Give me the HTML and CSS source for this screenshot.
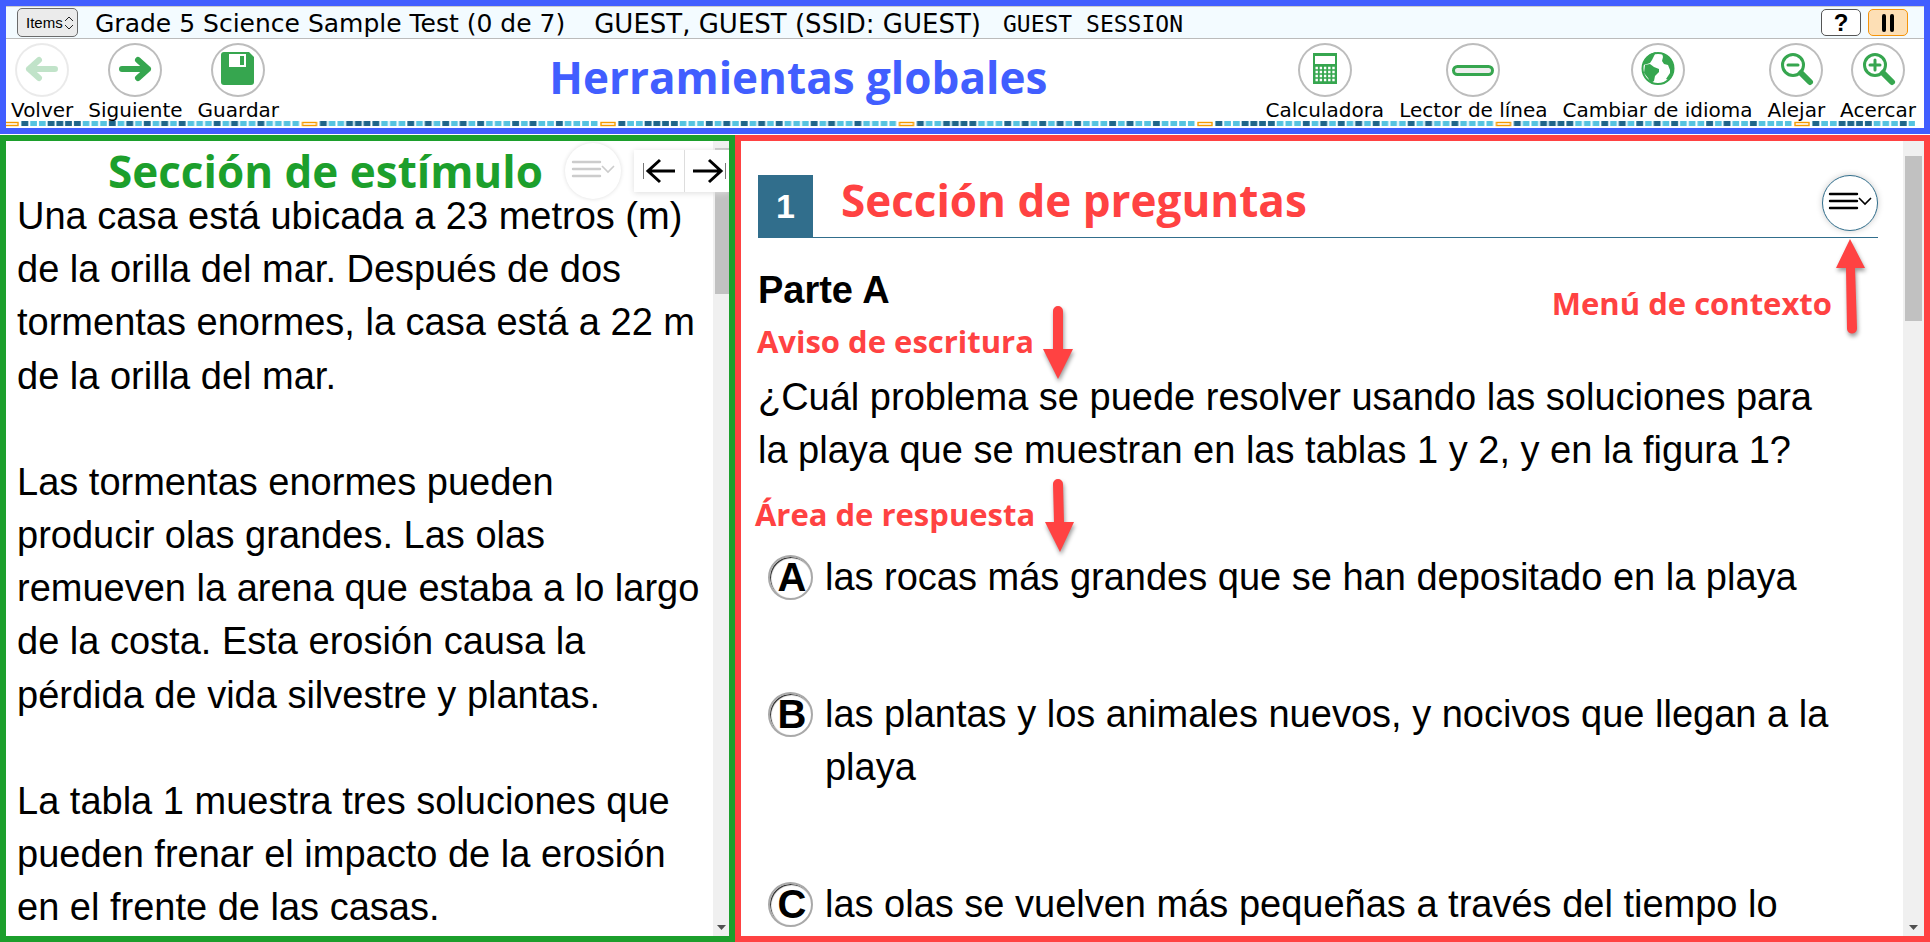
FILE: index.html
```html
<!DOCTYPE html>
<html lang="es">
<head>
<meta charset="utf-8">
<title>Grade 5 Science Sample Test</title>
<link rel="stylesheet" href="styles.css">
</head>
<body>
<header class="global">
  <div class="info">
    <label class="items">
      <select class="items-select" aria-label="Items"><option>Items</option></select>
      <svg class="items-icon" viewBox="0 0 10 14"><path d="M1 5l4-4 4 4M1 9l4 4 4-4"/></svg>
    </label>
    <span>Grade 5 Science Sample Test (0 de 7)</span>
    <span class="user">GUEST, GUEST (SSID: GUEST)</span>
    <span class="session">GUEST SESSION</span>
    <div class="info-actions">
      <button class="small-btn" type="button">?</button>
      <button class="small-btn pause" type="button" aria-label="Pausa"><svg viewBox="0 0 14 18" width="14" height="18"><path d="M3 2v14M11 2v14"/></svg></button>
    </div>
  </div>
  <div class="toolbar">
    <button class="tool" type="button" disabled>
      <svg class="tool-icon" viewBox="0 0 54 54"><path class="thick" d="M40 26H14M24 17l-10 9 10 9"/></svg>Volver
    </button>
    <button class="tool" type="button">
      <svg class="tool-icon" viewBox="0 0 54 54"><path class="thick" d="M14 26h26M30 17l10 9-10 9"/></svg>Siguiente
    </button>
    <button class="tool" type="button">
      <svg class="tool-icon" viewBox="0 0 54 54"><path class="fill" d="M13 9h25l5 5v25q0 3-3 3H13q-3 0-3-3V12q0-3 3-3z"/><path class="white" d="M18 11h17v13H18z"/><path class="fill" d="M29 13h4v9h-4z"/></svg>Guardar
    </button>
    <h1 class="note note-blue toolbar-note">Herramientas globales</h1>
    <button class="tool" type="button">
      <svg class="tool-icon" viewBox="0 0 54 54"><path class="fill" d="M15 10h24v31H15z"/><path class="white" d="M17 13h20v8H17z"/><path class="keys" d="M17.500 25h19.200M17.500 29h19.200M17.500 33h19.200M17.500 37h19.200"/></svg>Calculadora
    </button>
    <button class="tool" type="button">
      <svg class="tool-icon" viewBox="0 0 54 54"><rect class="ruler" x="7.500" y="23.500" width="39" height="8" rx="4"/></svg>Lector de línea
    </button>
    <button class="tool" type="button">
      <svg class="tool-icon" viewBox="0 0 54 54"><circle class="globe" cx="27" cy="25.500" r="15.500"/><path class="fill" d="M12 22l2-6 5-5 6-2-2 4-2 4-2 3-3 1zM14 22l5-1 4 3 5 2v3l-4 4-1 5-3 2-3-5-4-5zM31 10l6 3 5 7v9l-4 8-3-1 4-6v-3l-2-5-4-1-2-3 1-4z"/></svg>Cambiar de idioma
    </button>
    <button class="tool" type="button">
      <svg class="tool-icon" viewBox="0 0 54 54"><circle class="lens" cx="24" cy="22" r="10.500"/><path class="lens" d="M19 22h10"/><path class="handle" d="M32 30l9 9"/></svg>Alejar
    </button>
    <button class="tool" type="button">
      <svg class="tool-icon" viewBox="0 0 54 54"><circle class="lens" cx="24" cy="22" r="10.500"/><path class="lens" d="M19 22h10M24 17v10"/><path class="handle" d="M32 30l9 9"/></svg>Acercar
    </button>
  </div>
  <svg class="strip" aria-hidden="true">
    <defs>
      <pattern id="dashes" x="-3" width="298.500" height="6" patternUnits="userSpaceOnUse">
        <rect x="1" y="1.500" width="14" height="3" fill="#fff" stroke="#f59a00" stroke-width="1.400"/>
        <path stroke="#56c3e0" stroke-width="5" stroke-dasharray="6.700 2.040" d="M18.500 2.500H296"/>
        <path stroke="#20658a" stroke-width="5" d="M18.500 2.500h6.700M44.700 2.500h6.700M53.500 2.500h6.700M62.200 2.500h6.700M71 2.500h6.700M105.900 2.500h6.700M123.400 2.500h6.700M140.900 2.500h6.700M158.300 2.500h6.700M175.800 2.500h6.700M210.800 2.500h6.700M228.200 2.500h6.700M254.500 2.500h6.700"/>
      </pattern>
    </defs>
    <rect width="100%" height="6" fill="url(#dashes)"/>
  </svg>
</header>

<main class="panels">
  <section class="panel stimulus">
    <div class="content">
      <div class="stimulus-head">
        <h2 class="note note-green">Sección de estímulo</h2>
        <button class="menu-btn faded" type="button" aria-label="Menú"><svg viewBox="0 0 54 54"><path class="bars" d="M7 18h27M7 25h27M7 32h27"/><path class="caret" d="M36 22l6 6 6-6"/></svg></button>
        <div class="expanders">
          <button class="expander" type="button" aria-label="Contraer"><svg viewBox="0 0 50 42"><path class="edge" d="M9.500 13v16"/><path class="arrow" d="M41 21H14M26 10L14 21l12 11"/></svg></button>
          <button class="expander" type="button" aria-label="Expandir"><svg viewBox="0 0 50 42"><path class="edge" d="M40.500 13v16"/><path class="arrow" d="M8 21h27M24 10l12 11-12 11"/></svg></button>
        </div>
      </div>
      <div class="passage">
        <p>Una casa está ubicada a 23 metros (m) de la orilla del mar. Después de dos tormentas enormes, la casa está a 22 m de la orilla del mar.</p>
        <p>Las tormentas enormes pueden producir olas grandes. Las olas remueven la arena que estaba a lo largo de la costa. Esta erosión causa la pérdida de vida silvestre y plantas.</p>
        <p>La tabla 1 muestra tres soluciones que pueden frenar el impacto de la erosión en el frente de las casas.</p>
      </div>
    </div>
    <div class="scroll scroll-narrow"><div class="thumb"></div><svg class="down" viewBox="0 0 9 5"><path d="M0 0h9L4.500 5z"/></svg></div>
  </section>

  <section class="panel question">
    <div class="content">
      <div class="question-head">
        <span class="number">1</span>
        <h2 class="note note-red">Sección de preguntas</h2>
        <button class="menu-btn" type="button" aria-label="Menú de contexto"><svg viewBox="0 0 54 54"><path class="bars" d="M7 18h27M7 25h27M7 32h27"/><path class="caret" d="M36 22l6 6 6-6"/></svg></button>
      </div>
      <h3 class="part">Parte A</h3>
      <p class="prompt">¿Cuál problema se puede resolver usando las soluciones para la playa que se muestran en las tablas 1 y 2, y en la figura 1?</p>
      <div class="options">
        <label class="option"><span class="mark"><input type="radio" name="answer"><b>A</b></span><span>las rocas más grandes que se han depositado en la playa</span></label>
        <label class="option"><span class="mark"><input type="radio" name="answer"><b>B</b></span><span>las plantas y los animales nuevos, y nocivos que llegan a la playa</span></label>
        <label class="option"><span class="mark"><input type="radio" name="answer"><b>C</b></span><span>las olas se vuelven más pequeñas a través del tiempo lo</span></label>
      </div>
      <div class="callout callout-prompt">Aviso de escritura<svg class="pointer" viewBox="0 0 32 76"><path d="M11 7a5 5 0 0 1 10 0v38h10L16 75 1 45h10z"/></svg></div>
      <div class="callout callout-answer">Área de respuesta<svg class="pointer" viewBox="0 0 32 76"><path d="M10 7a5 5 0 0 1 10 0l1 38h10L17 75 2 45h9z"/></svg></div>
      <div class="callout callout-menu">Menú de contexto<svg class="pointer pointer-up" viewBox="0 0 32 98"><path d="M15 1l15 29H20l2 60a5 5 0 0 1-10 1l-1-61H1z"/></svg></div>
    </div>
    <div class="scroll"><div class="thumb"></div><svg class="down" viewBox="0 0 9 5"><path d="M0 0h9L4.500 5z"/></svg></div>
  </section>
</main>
</body>
</html>
```

FILE: styles.css
```css
* { box-sizing: border-box; }
body {
  margin: 0;
  height: 100vh;
  display: flex;
  flex-direction: column;
  gap: 1px;
  overflow: hidden;
  background: #fff;
  color: #000;
  font-family: "DejaVu Sans", sans-serif;
}
h1, h2, h3, p { margin: 0; }
button { padding: 0; font: inherit; color: inherit; }
svg { display: block; fill: none; }

/* Annotation text */
.note {
  font: bold 44px/48px "Open Sans", sans-serif;
  white-space: nowrap;
}
.note-blue { color: #415eff; }
.note-green { color: #1c9f2c; }
.note-red { color: #ff4242; }

/* Global header */
.global { border: 6px solid #415eff; }
.info {
  display: flex;
  align-items: center;
  gap: 22px;
  height: 33px;
  padding: 0 16px 0 11px;
  background: #f3fbff;
  border-top: 1px solid #ccc;
  border-bottom: 1px solid #bbb;
  font-size: 25px;
  line-height: 30px;
  white-space: nowrap;
}
.info > span { padding-top: 2px; }
.items { display: flex; position: relative; margin-right: -5px; }
.items-select {
  appearance: none;
  width: 61px;
  height: 29px;
  padding: 0 8px;
  border: 1px solid #6b6b6b;
  border-radius: 5px;
  background: #ebebeb;
  font: 15px "Liberation Sans", sans-serif;
}
.items-icon {
  position: absolute;
  right: 4px;
  top: 8px;
  width: 10px;
  height: 14px;
  stroke: #222;
}
.user { margin-left: 7px; font-size: 26px; }
.session { font: 23px "DejaVu Sans Mono", monospace; }
.info-actions { display: flex; gap: 7px; margin-left: auto; }
.small-btn {
  display: flex;
  align-items: center;
  justify-content: center;
  width: 40px;
  height: 27px;
  border: 1px solid #555;
  border-radius: 5px;
  background: #fff;
  font: bold 24px "Liberation Sans", sans-serif;
}
.pause { background: #fddfb5; border-color: #f5940a; }
.pause svg { stroke: #000; stroke-width: 4; stroke-linecap: round; }

.toolbar {
  display: flex;
  align-items: flex-start;
  gap: 15px;
  height: 82px;
  padding: 4px 8px 0 5px;
}
.tool {
  position: relative;
  z-index: 1;
  display: flex;
  flex-direction: column;
  align-items: center;
  border: 0;
  background: none;
  font-size: 20px;
  line-height: 26px;
  white-space: nowrap;
}
.tool:disabled { color: #000; }
.tool:disabled .tool-icon { opacity: 0.3; }
.tool-icon {
  width: 54px;
  height: 54px;
  border-radius: 50%;
  box-shadow: inset 0 0 0 2px #bdbdbd;
  stroke-linecap: round;
  stroke-linejoin: round;
}
.thick { stroke: #36a64f; stroke-width: 6; }
.fill { fill: #36a64f; }
.white { fill: #fff; }
.keys { stroke: #fff; stroke-width: 2.4; stroke-linecap: butt; stroke-dasharray: 2.4 1.8; }
.ruler { fill: #eee; stroke: #36a64f; stroke-width: 3; }
.globe { stroke: #36a64f; stroke-width: 2; }
.lens { stroke: #36a64f; stroke-width: 3; }
.handle { stroke: #36a64f; stroke-width: 6; }
.toolbar-note { flex: 1; padding: 10px 0 0 52px; text-align: center; }
.strip { width: calc(100% - 9px); height: 7px; }

/* Panels */
.panels {
  flex: 1;
  min-height: 0;
  display: grid;
  grid-template-columns: 38.08% 1fr;
  font: 38px/1.4 "Liberation Sans", sans-serif;
}
.panel { display: flex; min-width: 0; min-height: 0; border: 6px solid; overflow: hidden; }
.stimulus { border-color: #1c9f2c; }
.question { border-color: #ff4242; }
.content { position: relative; flex: 1; min-width: 0; }

.stimulus-head {
  position: relative;
  z-index: 1;
  display: flex;
  height: 49px;
  margin-right: -16px;
  padding-left: 102px;
}
.stimulus-head .note { line-height: 60px; }
.menu-btn {
  flex: none;
  width: 56px;
  height: 56px;
  margin-left: auto;
  border: 1px solid #316e8c;
  border-radius: 50%;
  background: #fff;
  box-shadow: 0 0 6px #ccc;
  stroke: #000;
}
.faded { margin-top: 2px; border-color: transparent; stroke: #ccc; box-shadow: 0 0 4px #ddd; }
.bars { stroke-width: 2.4; stroke-linecap: round; }
.caret { stroke-width: 1.6; }
.expanders {
  display: flex;
  height: 42px;
  margin: 9px 0 0 13px;
  background: #fff;
  box-shadow: 0 1px 6px #ddd;
}
.expander { display: flex; width: 50px; border: 0; background: none; stroke: #000; }
.expander + .expander { width: 45px; border-left: 1px solid #ddd; }
.expander svg { flex: none; width: 50px; height: 42px; }
.edge { stroke: #777; stroke-width: 1; }
.arrow { stroke-width: 3; }

.passage { display: grid; gap: 53px; padding: 0 13px 0 11px; }

.question .content { padding: 34px 25px 0 17px; }
.question-head {
  display: flex;
  height: 63px;
  border-bottom: 1px solid #316e8c;
}
.question-head .note { padding-left: 28px; line-height: 50px; }
.number {
  width: 55px;
  height: 63px;
  background: #316e8c;
  color: #fff;
  font: bold 34px/62px "Liberation Sans", sans-serif;
  text-align: center;
}
.part { margin: 26px 0 54px; font-size: 38px; }
.prompt { padding-right: 38px; }
.options { display: grid; gap: 84px; margin-top: 73px; padding: 0 38px 0 10px; }
.option { display: flex; gap: 12px; }
.mark { display: grid; flex: none; width: 45px; height: 53px; place-items: center; }
.mark > * { grid-area: 1 / 1; }
.mark input {
  appearance: none;
  width: 45px;
  height: 45px;
  margin: 0;
  border: 2px solid #a9a9a9;
  border-radius: 50%;
  box-shadow: inset 1px 1px 1px #222;
}
.mark b { padding-left: 3px; font-size: 40px; line-height: 53px; }

.callout {
  position: absolute;
  display: flex;
  gap: 8px;
  color: #ff4242;
  font: bold 31px/40px "Open Sans", sans-serif;
  white-space: nowrap;
}
.callout-prompt { left: 16px; top: 180px; }
.callout-answer { left: 14px; top: 353px; }
.callout-menu { right: 36px; top: 142px; gap: 3px; }
.pointer {
  width: 32px;
  height: 76px;
  margin-top: -17px;
  fill: #ff4242;
  filter: drop-shadow(1px 3px 2px #999);
}
.pointer-up { height: 98px; margin-top: -45px; }

/* Scrollbars */
.scroll {
  display: flex;
  flex-direction: column;
  justify-content: space-between;
  align-items: center;
  flex: none;
  width: 21px;
  padding: 15px 0 6px;
  background: #f0f0f0;
}
.scroll-narrow { width: 16px; padding: 7px 0 6px 2px; }
.thumb { width: 17px; height: 165px; background: #c1c1c1; }
.scroll-narrow .thumb { width: 14px; height: 146px; }
.down { width: 9px; height: 5px; fill: #505050; }
```
